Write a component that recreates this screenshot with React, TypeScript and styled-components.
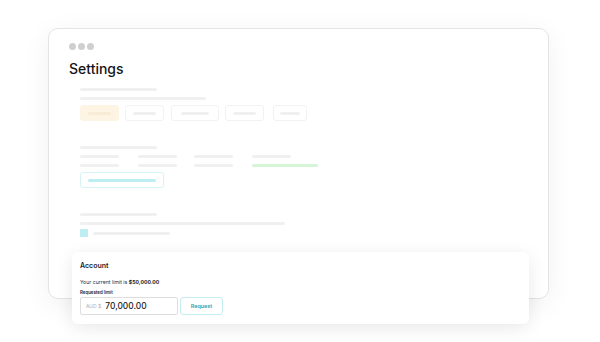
import React, { FC } from 'react';
import styled, { createGlobalStyle } from 'styled-components';

const GlobalStyle = createGlobalStyle`
  html, body {
    margin: 0;
    padding: 0;
    background: #ffffff;
    font-family: Inter, "Liberation Sans", sans-serif;
  }
`;

const Stage = styled.div`
  position: relative;
  width: 600px;
  height: 342px;
  padding: 28px 0 0 48px;
  box-sizing: border-box;
  overflow: hidden;
`;

const Window = styled.div`
  width: 501px;
  height: 271px;
  box-sizing: border-box;
  border: 1px solid #e4e4e4;
  border-radius: 10px;
  background: #fff;
  box-shadow: 0 6px 28px rgba(0, 0, 0, 0.06);
  padding: 14px 20px;
  display: flex;
  flex-direction: column;
`;

const Dots = styled.div`
  display: flex;
  gap: 2px;
`;

const Dot = styled.span`
  width: 7px;
  height: 7px;
  border-radius: 50%;
  background: #cfcfcf;
`;

const Title = styled.h1`
  margin: 11px 0 0;
  font-size: 14px;
  line-height: 16px;
  font-weight: 500;
  color: #151515;
`;

const Content = styled.div`
  margin: 11px 0 0 11px;
  display: flex;
  flex-direction: column;
`;

const Section = styled.div`
  display: flex;
  flex-direction: column;
  gap: 6px;
  & + & {
    margin-top: 25px;
  }
`;

const Bar = styled.div<{ $w: number; $color?: string }>`
  width: ${(p) => p.$w}px;
  height: 3px;
  border-radius: 2px;
  background: ${(p) => p.$color || '#f0f0f0'};
`;

const ChipRow = styled.div`
  display: flex;
  margin-top: -1px;
`;

const Chip = styled.div<{ $w: number; $ml?: number; $active?: boolean; $teal?: boolean }>`
  width: ${(p) => p.$w}px;
  height: 16px;
  margin-left: ${(p) => p.$ml || 0}px;
  box-sizing: border-box;
  border-radius: 3px;
  display: flex;
  align-items: center;
  justify-content: center;
  border: 1px solid
    ${(p) => (p.$active ? '#fdf4e4' : p.$teal ? '#d6f3f5' : '#f2f2f2')};
  background: ${(p) => (p.$active ? '#fdf4e4' : '#fff')};
`;

const Grid = styled.div`
  display: grid;
  grid-template-columns: 58px 56px 58px auto;
  row-gap: 6px;
`;

const CheckRow = styled.div`
  display: flex;
  align-items: center;
  gap: 5px;
  margin-top: -2px;
`;

const Check = styled.span`
  width: 8px;
  height: 8px;
  background: #bdeff2;
`;

const AccountCard = styled.div`
  position: absolute;
  left: 72px;
  top: 252px;
  width: 457px;
  height: 72px;
  box-sizing: border-box;
  border-radius: 6px;
  background: #fff;
  box-shadow: 0 4px 18px rgba(0, 0, 0, 0.09);
  padding: 9px 8px;
  display: flex;
  flex-direction: column;
`;

const CardTitle = styled.div`
  font-size: 7px;
  line-height: 10px;
  font-weight: 600;
  color: #1e2230;
`;

const LimitText = styled.div`
  margin-top: 7px;
  font-size: 5.2px;
  line-height: 8px;
  color: #2a2e3a;
  b {
    font-weight: 700;
    color: #161a26;
  }
`;

const Label = styled.div`
  margin-top: 4px;
  font-size: 4.4px;
  line-height: 6px;
  font-weight: 600;
  color: #1e2230;
`;

const FormRow = styled.div`
  display: flex;
  gap: 2px;
  margin-top: 1px;
`;

const Input = styled.div`
  width: 98px;
  height: 18px;
  box-sizing: border-box;
  border: 1px solid #dedede;
  border-radius: 2px;
  display: flex;
  align-items: center;
  padding-left: 5px;
  gap: 4px;
`;

const Currency = styled.span`
  font-size: 5px;
  color: #b0b0b0;
`;

const Amount = styled.span`
  font-size: 8.4px;
  font-weight: 500;
  color: #1b1b1b;
`;

const RequestButton = styled.div`
  width: 43px;
  height: 18px;
  box-sizing: border-box;
  border: 1px solid #c5eef2;
  border-radius: 3px;
  display: flex;
  align-items: center;
  justify-content: center;
  font-size: 5.4px;
  font-weight: 600;
  color: #2ba3b3;
`;

const chips = [
  { w: 39, ml: 0, inner: 23, active: true },
  { w: 39, ml: 6, inner: 23 },
  { w: 48, ml: 7, inner: 28 },
  { w: 39, ml: 6, inner: 23 },
  { w: 34, ml: 9, inner: 20 },
];

const App: FC = () => (
  <>
    <GlobalStyle />
    <Stage>
      <Window>
        <Dots>
          <Dot />
          <Dot />
          <Dot />
        </Dots>
        <Title>Settings</Title>
        <Content>
          <Section>
            <Bar $w={77} />
            <Bar $w={126} />
            <ChipRow>
              {chips.map((c, i) => (
                <Chip key={i} $w={c.w} $ml={c.ml} $active={c.active}>
                  <Bar $w={c.inner} $color={c.active ? '#f9ecd6' : '#f0f0f0'} />
                </Chip>
              ))}
            </ChipRow>
          </Section>
          <Section>
            <Bar $w={77} />
            <Grid>
              <Bar $w={39} />
              <Bar $w={39} />
              <Bar $w={39} />
              <Bar $w={39} />
              <Bar $w={39} />
              <Bar $w={39} />
              <Bar $w={39} />
              <Bar $w={66} $color="#d6f5d6" />
            </Grid>
            <Chip $w={84} $teal style={{ marginTop: -1 }}>
              <Bar $w={68} $color="#bdeff2" />
            </Chip>
          </Section>
          <Section>
            <Bar $w={77} />
            <Bar $w={205} />
            <CheckRow>
              <Check />
              <Bar $w={77} />
            </CheckRow>
          </Section>
        </Content>
      </Window>
      <AccountCard>
        <CardTitle>Account</CardTitle>
        <LimitText>
          Your current limit is <b>$50,000.00</b>
        </LimitText>
        <Label>Requested limit</Label>
        <FormRow>
          <Input>
            <Currency>AUD $</Currency>
            <Amount>70,000.00</Amount>
          </Input>
          <RequestButton>Request</RequestButton>
        </FormRow>
      </AccountCard>
    </Stage>
  </>
);

export default App;
